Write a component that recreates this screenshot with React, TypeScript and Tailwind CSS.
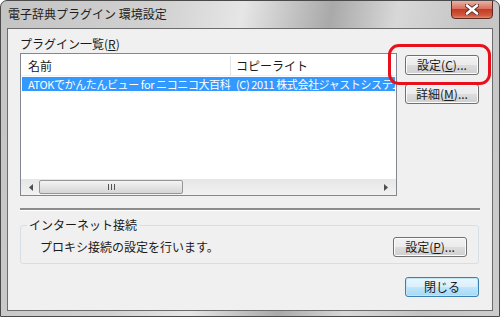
import React from 'react';

const font = { fontFamily: '"Noto Sans CJK JP", "Noto Sans", sans-serif' };

function WinButton({ children, primary = false }: { children: React.ReactNode; primary?: boolean }) {
  return (
    <div
      className={`w-[74px] h-[20px] flex items-center justify-center rounded-[3px] border text-[12px] leading-none text-[#1a1a1a] ${
        primary
          ? 'border-[#3c7fb1] bg-[linear-gradient(#eaf6fd,#d9f0fc_50%,#bee6fd_50%,#a7d9f5)] shadow-[inset_0_0_0_1px_#c4e5f6]'
          : 'border-[#707070] bg-[linear-gradient(#f2f2f2,#ebebeb_50%,#dddddd_50%,#cfcfcf)] shadow-[inset_0_0_0_1px_#fcfcfc]'
      }`}
    >
      {children}
    </div>
  );
}

export default function App() {
  return (
    <div
      style={font}
      className="relative w-[500px] h-[317px] flex flex-col rounded-t-[7px] border border-[#4a4a4a] bg-[linear-gradient(100deg,#c4c4c4_0%,#d2d2d2_30%,#e6e6e6_44%,#a9a9a9_60%,#d8d8d8_72%,#c4c4c4_86%,#cdcdcd_100%)] overflow-hidden"
    >
      {/* title bar */}
      <div className="h-[27px] flex items-start shrink-0">
        <div className="pl-[7px] pt-[6px] text-[12px] leading-[14px] text-[#1e1e1e]">電子辞典プラグイン 環境設定</div>
        <div className="ml-auto mr-[6px] w-[42px] h-[19px] -mt-px rounded-b-[4px] border border-[#5e2a22] bg-[linear-gradient(#eab2a6,#d8705d_45%,#c43a22_50%,#d15a3f_85%,#e08a70)] flex items-center justify-center">
          <svg width="14" height="11" viewBox="0 0 14 11">
            <path d="M2 1.5 L12 9.5 M12 1.5 L2 9.5" stroke="#5a2a22" strokeWidth="4.2" strokeLinecap="round" />
            <path d="M2 1.5 L12 9.5 M12 1.5 L2 9.5" stroke="#ffffff" strokeWidth="2.6" strokeLinecap="round" />
          </svg>
        </div>
      </div>

      {/* client area */}
      <div className="mx-[6px] h-[283px] border border-[#6c6c6c] bg-[#f0f0f0] flex flex-col px-[12px] text-[12px] text-[#1a1a1a]">
        <div className="pt-[8px] leading-[14px]">
          プラグイン一覧(<u>R</u>)
        </div>

        <div className="mt-[2px] flex gap-[8px]">
          {/* list view */}
          <div className="w-[377px] h-[143px] border border-[#828790] bg-white flex flex-col">
            <div className="h-[22px] flex items-center pt-[2px] border-b border-[#f0f0f0]">
              <div className="w-[210px] pl-[7px] border-r border-[#e3e3e3] h-full flex items-center">名前</div>
              <div className="pl-[5px]">コピーライト</div>
            </div>
            <div className="mt-px mx-px h-[14px] w-[373px] bg-[#3399ff] text-white text-[11px] tracking-[-0.4px] flex items-center overflow-hidden whitespace-nowrap leading-none">
              <div className="w-[213px] pl-[6px] shrink-0">ATOKでかんたんビュー for ニコニコ大百科</div>
              <div className="pl-[1px]">(C) 2011 株式会社ジャストシステム</div>
            </div>
            <div className="flex-1" />
            {/* horizontal scrollbar */}
            <div className="h-[16px] flex items-center bg-[linear-gradient(#e6e6e6,#f2f2f2)] px-[2px]">
              <div className="w-[16px] flex justify-center">
                <svg width="4" height="7" viewBox="0 0 4 7"><path d="M4 0 L0 3.5 L4 7 Z" fill="#4d4d4d" /></svg>
              </div>
              <div className="w-[144px] h-[14px] rounded-[2px] border border-[#969696] bg-[linear-gradient(#f4f4f4,#e4e4e4_50%,#d6d6d6)] flex items-center justify-center">
                <div className="flex gap-[2px]">
                  <div className="w-px h-[6px] bg-[#555]" />
                  <div className="w-px h-[6px] bg-[#555]" />
                  <div className="w-px h-[6px] bg-[#555]" />
                </div>
              </div>
              <div className="flex-1" />
              <div className="w-[16px] flex justify-center">
                <svg width="4" height="7" viewBox="0 0 4 7"><path d="M0 0 L4 3.5 L0 7 Z" fill="#4d4d4d" /></svg>
              </div>
            </div>
          </div>

          {/* side buttons */}
          <div className="pt-[2px] flex flex-col gap-[9px]">
            <WinButton>
              設定(<u>C</u>)...
            </WinButton>
            <WinButton>
              詳細(<u>M</u>)...
            </WinButton>
          </div>
        </div>

        {/* separator */}
        <div className="mt-[12px] w-[460px] border-t-2 border-[#8c8c8c] border-b border-b-white" />

        {/* group box */}
        <div className="relative mt-[14px] w-[459px] h-[39px] rounded-[3px] border border-[#d5dfe5] flex items-center pl-[19px] pr-[11px] pt-[4px]">
          <div className="absolute left-[6px] -top-[8px] px-[2px] bg-[#f0f0f0] leading-[14px]">インターネット接続</div>
          <div>プロキシ接続の設定を行います。</div>
          <div className="ml-auto">
            <WinButton>
              設定(<u>P</u>)...
            </WinButton>
          </div>
        </div>

        <div className="mt-[13px] flex justify-end pr-[1px]">
          <WinButton primary>閉じる</WinButton>
        </div>
      </div>

      {/* annotation highlight */}
      <div className="absolute left-[387px] top-[43px] w-[103px] h-[41px] rounded-[11px] border-[3px] border-[#e8101a]" />
    </div>
  );
}
